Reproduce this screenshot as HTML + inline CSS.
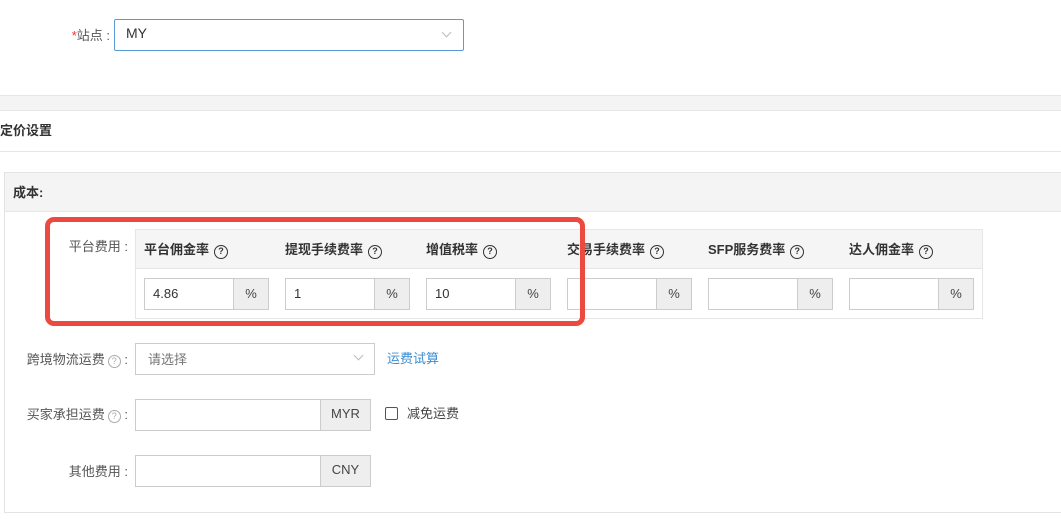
<!DOCTYPE html>
<html><head><meta charset="utf-8"><style>
*{box-sizing:border-box;margin:0;padding:0}
body{width:1061px;height:519px;background:#fff;font-family:"Liberation Sans","Noto Sans CJK SC",sans-serif;font-size:13px;color:#333;position:relative;overflow:hidden}
.a{position:absolute}
.lbl{color:#555;text-align:right}
.inp{border:1px solid #ccc;background:#fff}
.add{border:1px solid #ccc;background:#eee;text-align:center;color:#444}
.q{display:inline-block;width:14px;height:14px;border:1.8px solid #333;border-radius:50%;font-size:9px;line-height:10px;text-align:center;font-weight:bold;vertical-align:0px;margin-left:5px}
.q2{display:inline-block;width:13px;height:13px;border:1px solid #aaa;border-radius:50%;font-size:9px;line-height:11px;text-align:center;color:#aaa;vertical-align:0px;margin-left:3px}
.chev{width:7px;height:7px;border-right:1px solid #bbb;border-bottom:1px solid #bbb;transform:rotate(45deg)}
</style></head><body>
<div class="a lbl" style="left:60px;top:25px;width:50px"><span style="color:#e33">*</span>站点 :</div>
<div class="a" style="left:114px;top:19px;width:350px;height:32px;border:1px solid #5b9bd5;border-radius:2px"></div>
<div class="a" style="left:126px;top:25px;font-size:14px">MY</div>
<div class="a chev" style="left:443px;top:29px"></div>
<div class="a" style="left:0;top:95px;width:1061px;height:16px;background:#f4f4f4;border-top:1px solid #e6e6e6;border-bottom:1px solid #e6e6e6"></div>
<div class="a" style="left:0;top:120px;font-weight:bold;color:#333">定价设置</div>
<div class="a" style="left:0;top:151px;width:1061px;height:1px;background:#e6e6e6"></div>
<div class="a" style="left:4px;top:172px;width:1070px;height:341px;border:1px solid #e3e3e3"></div>
<div class="a" style="left:5px;top:173px;width:1070px;height:39px;background:#f4f4f4;border-bottom:1px solid #e6e6e6"></div>
<div class="a" style="left:13px;top:182px;font-weight:bold">成本:</div>
<div class="a lbl" style="left:50px;top:236px;width:78px">平台费用 :</div>
<div class="a" style="left:135px;top:229px;width:848px;height:90px;border:1px solid #e6e6e6"></div>
<div class="a" style="left:136px;top:230px;width:846px;height:39px;background:#f5f5f5;border-bottom:1px solid #e6e6e6"></div>
<div class="a" style="left:144px;top:239px;font-weight:bold">平台佣金率<span class="q">?</span></div>
<div class="a" style="left:285px;top:239px;font-weight:bold">提现手续费率<span class="q">?</span></div>
<div class="a" style="left:426px;top:239px;font-weight:bold">增值税率<span class="q">?</span></div>
<div class="a" style="left:567px;top:239px;font-weight:bold">交易手续费率<span class="q">?</span></div>
<div class="a" style="left:708px;top:239px;font-weight:bold">SFP服务费率<span class="q">?</span></div>
<div class="a" style="left:849px;top:239px;font-weight:bold">达人佣金率<span class="q">?</span></div>
<div class="a inp" style="left:144px;top:278px;width:90px;height:32px;padding:7px 0 0 8px">4.86</div><div class="a add" style="left:233px;top:278px;width:36px;height:32px;line-height:29px">%</div>
<div class="a inp" style="left:285px;top:278px;width:90px;height:32px;padding:7px 0 0 8px">1</div><div class="a add" style="left:374px;top:278px;width:36px;height:32px;line-height:29px">%</div>
<div class="a inp" style="left:426px;top:278px;width:90px;height:32px;padding:7px 0 0 8px">10</div><div class="a add" style="left:515px;top:278px;width:36px;height:32px;line-height:29px">%</div>
<div class="a inp" style="left:567px;top:278px;width:90px;height:32px"></div><div class="a add" style="left:656px;top:278px;width:36px;height:32px;line-height:29px">%</div>
<div class="a inp" style="left:708px;top:278px;width:90px;height:32px"></div><div class="a add" style="left:797px;top:278px;width:36px;height:32px;line-height:29px">%</div>
<div class="a inp" style="left:849px;top:278px;width:90px;height:32px"></div><div class="a add" style="left:938px;top:278px;width:36px;height:32px;line-height:29px">%</div>
<div class="a" style="left:45px;top:217px;width:540px;height:109px;border:5px solid #ec4a40;border-radius:9px"></div>
<div class="a lbl" style="left:10px;top:349px;width:118px">跨境物流运费<span class="q2">?</span> :</div>
<div class="a inp" style="left:135px;top:343px;width:240px;height:32px;padding:5px 0 0 12px;color:#777">请选择</div>
<div class="a chev" style="left:355px;top:352px"></div>
<div class="a" style="left:387px;top:348px;color:#3c8dd0">运费试算</div>
<div class="a lbl" style="left:10px;top:404px;width:118px">买家承担运费<span class="q2">?</span> :</div>
<div class="a inp" style="left:135px;top:399px;width:186px;height:32px"></div><div class="a add" style="left:320px;top:399px;width:51px;height:32px;line-height:28px">MYR</div>
<div class="a" style="left:385px;top:407px;width:13px;height:13px;border:1px solid #555;border-radius:2px"></div>
<div class="a" style="left:407px;top:403px;color:#444">减免运费</div>
<div class="a lbl" style="left:10px;top:461px;width:118px">其他费用 :</div>
<div class="a inp" style="left:135px;top:455px;width:186px;height:32px"></div><div class="a add" style="left:320px;top:455px;width:51px;height:32px;line-height:28px">CNY</div>
</body></html>
